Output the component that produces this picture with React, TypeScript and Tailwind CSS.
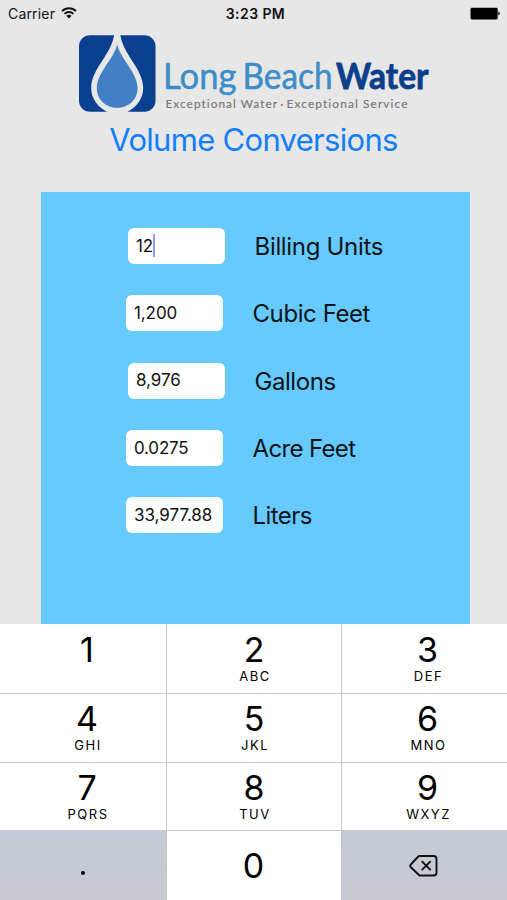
type Row = { value: string; label: string; indent: boolean; tracking: string; labelTracking: string; caret?: boolean };

const rows: Row[] = [
  { value: "12", label: "Billing Units", indent: true, tracking: "tracking-[-0.100px]", labelTracking: "tracking-[-0.320px]", caret: true },
  { value: "1,200", label: "Cubic Feet", indent: false, tracking: "tracking-[-0.100px]", labelTracking: "tracking-[-0.420px]" },
  { value: "8,976", label: "Gallons", indent: true, tracking: "tracking-[-0.050px]", labelTracking: "tracking-[-0.450px]" },
  { value: "0.0275", label: "Acre Feet", indent: false, tracking: "tracking-[-0.200px]", labelTracking: "tracking-[-0.650px]" },
  { value: "33,977.88", label: "Liters", indent: false, tracking: "tracking-[-0.030px]", labelTracking: "tracking-[-0.550px]" },
];

const keys = [
  ["1", ""], ["2", "ABC"], ["3", "DEF"],
  ["4", "GHI"], ["5", "JKL"], ["6", "MNO"],
  ["7", "PQRS"], ["8", "TUV"], ["9", "WXYZ"],
];

function StatusBar() {
  return (
    <header className="flex h-[28px] items-center justify-between pl-2 pr-[7px] text-[14px] leading-none">
      <div className="flex w-[160px] items-center gap-[6px]">
        <span className="tracking-[0.180px]">Carrier</span>
        <svg width="16" height="12" viewBox="0 0 16 12" fill="none" stroke="#111" strokeWidth="1.9" className="-mt-[2px]">
          <path d="M1 4.2C5 .2 11 .2 15 4.2" />
          <path d="M3.5 6.9C6 4.4 10 4.4 12.5 6.9" />
          <path d="M8 11.6 5.3 8.8Q8 6.5 10.7 8.8Z" fill="#111" stroke="none" />
        </svg>
      </div>
      <span className="pl-[3px] font-semibold tracking-[0.420px]">3:23 PM</span>
      <div className="flex w-[160px] justify-end">
        <svg width="30" height="13" viewBox="0 0 30 13" className="-mt-px">
          <rect x="0.5" y="0.8" width="27.2" height="11.6" rx="1.4" />
          <path d="M28.3 4.6Q29.8 5 29.8 6.6T28.3 8.6Z" />
        </svg>
      </div>
    </header>
  );
}

function Logo() {
  return (
    <svg width="360" height="84" viewBox="75 32 360 84" className="ml-[75px] mt-1 block">
      <rect x="79" y="35.2" width="76.5" height="76.6" rx="11" fill="#0b3f90" />
      <path d="M114.500 32H120C121.500 54 143.200 68 143.200 88C143.200 99 136.500 107 127 112.200H107.500C98 107 91.200 99 91.200 88C91.200 68 113 54 114.500 32Z" fill="#e7e7e7" />
      <path d="M117.200 44.500C120.500 59 137.600 73 137.600 88C137.600 100 128 107.800 117.200 107.800S96.800 100 96.800 88C96.800 73 113.900 59 117.200 44.500Z" fill="#427fc4" />
      <g fontFamily="Lato, sans-serif" fontSize="36" fill="#3e8dc8" stroke="#3e8dc8" strokeWidth="0.500">
        <text x="163" y="89" textLength="73.500" lengthAdjust="spacingAndGlyphs">Long</text>
        <text x="242.500" y="89" textLength="90" lengthAdjust="spacingAndGlyphs">Beach</text>
      </g>
      <text x="336" y="89" fontFamily="Lato, sans-serif" fontSize="36" fontWeight="700" fill="#0b3f8c" stroke="#0b3f8c" strokeWidth="0.800" textLength="92.500" lengthAdjust="spacingAndGlyphs">Water</text>
      <g fontFamily="Lato, sans-serif" fontSize="11.800" fill="#777" stroke="#777" strokeWidth="0.15" style={{ fontVariantLigatures: "none" }}>
        <text x="165.500" y="108.300" textLength="111.500" lengthAdjust="spacing">Exceptional Water</text>
        <circle cx="281.800" cy="105" r="1" />
        <text x="286.500" y="108.300" textLength="121" lengthAdjust="spacing">Exceptional Service</text>
      </g>
    </svg>
  );
}

function ConversionRow({ row }: { row: Row }) {
  return (
    <div className={`flex h-9 items-center gap-[29.500px] ${row.indent ? "pl-[2px]" : ""}`}>
      <div className="flex h-9 w-[97px] items-center rounded-[6px] bg-white pl-[8px] text-[17px] text-[#111]">
        <span className={`pt-px ${row.tracking}`}>{row.value}</span>
        {row.caret && <span className="-mt-[2px] h-[23px] w-[2px] bg-[#8f9cf5]" />}
      </div>
      <span className={`pt-[2px] text-[24px] leading-none text-[#0a1418] ${row.labelTracking}`}>{row.label}</span>
    </div>
  );
}

function Keypad() {
  return (
    <div className="grid h-[276px] grid-cols-[166px_174px_165px] grid-rows-[69px_67.500px_67.500px_69px] gap-px bg-[#c9c9cb] text-black">
      {keys.map(([digit, letters], i) => (
        <div key={digit} className={`flex flex-col items-center bg-white ${i < 3 ? "pt-[6px]" : "pt-[5px]"} ${i % 3 === 0 ? "pl-[8px]" : i % 3 === 2 ? "pl-[6px]" : ""}`}>
          <span className="text-[34px] leading-[39px]">{digit}</span>
          {letters && <span className="pl-[2px] text-[13px] leading-[15px] tracking-[1.500px]">{letters}</span>}
        </div>
      ))}
      <div className="flex items-center justify-center bg-linear-to-b from-[#c3cad5] to-[#c8cad1]">
        <span className="mt-[14px] size-1 rounded-full bg-black" />
      </div>
      <div className="flex items-center justify-center bg-white pr-px text-[34px] leading-none">0</div>
      <div className="flex items-center justify-center bg-linear-to-b from-[#c4cad5] to-[#c8cad1] pr-[2px]">
        <svg width="29" height="22" viewBox="0 0 29 22" fill="none" stroke="#111" strokeWidth="1.900" strokeLinejoin="round" strokeLinecap="round">
          <path d="M10.500 1H24.500Q27.500 1 27.500 4V17.500Q27.500 20.500 24.500 20.500H10.500L1.800 12.200Q.7 11 1.800 9.500L8.800 2Q9.700 1 10.500 1Z" />
          <path d="m13.200 6.700 8 8m0-8-8 8" />
        </svg>
      </div>
    </div>
  );
}

export default function App() {
  return (
    <div className="flex h-[900px] w-[507px] flex-col overflow-hidden bg-[#e7e7e7] font-['Inter',sans-serif] text-[#111]">
      <StatusBar />
      <Logo />
      <h1 className="flex h-[48px] items-center justify-center pb-[2px] text-[31px] leading-none tracking-[-0.700px] text-[#147efb]">Volume Conversions</h1>
      <main className="ml-[41px] mt-7 flex w-[429px] flex-1 flex-col gap-[31.250px] bg-[#66caff] pl-[85px] pt-[36px]">
        {rows.map((row) => <ConversionRow key={row.label} row={row} />)}
      </main>
      <Keypad />
    </div>
  );
}
